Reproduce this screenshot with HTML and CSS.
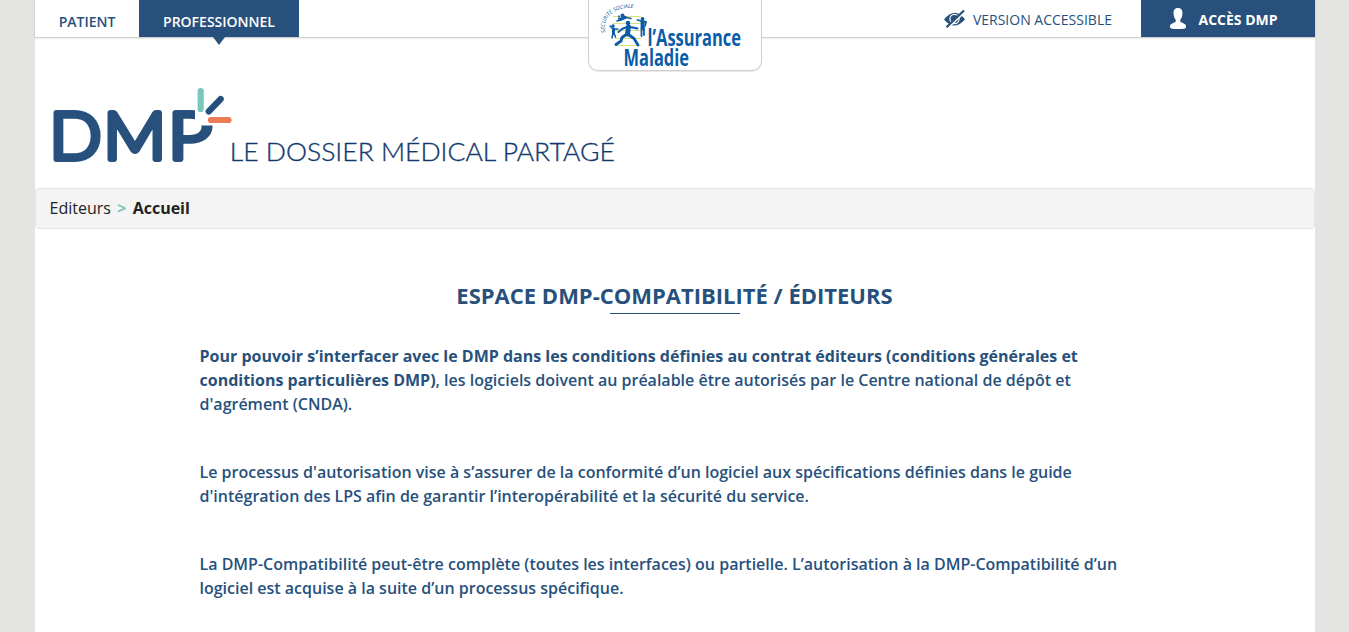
FILE: index.html
```
<!DOCTYPE html>
<html lang="fr">
<head>
<meta charset="utf-8">
<title>DMP - Espace éditeurs</title>
<link rel="stylesheet" href="styles.css">
</head>
<body>
<div class="page">
  <header class="topbar">
    <nav class="tabs">
      <a class="tab">PATIENT</a>
      <a class="tab tab-active">PROFESSIONNEL</a>
    </nav>
    <div class="tools">
      <a class="accessible">
        <svg width="22" height="20" viewBox="0 0 22 20">
          <path d="M0 10.500Q11-3 21 10.500Q10 22.500 0 10.500Z" fill="#27517c"/>
          <circle cx="10.500" cy="10" r="4.600" fill="none" stroke="#fff" stroke-width="1.200"/>
          <path d="M4.200 18.500L20.500 3" stroke="#fff" stroke-width="2.200"/>
          <path d="M2.500 18.300L20 1.500" stroke="#27517c" stroke-width="2.200"/>
        </svg>
        <span>VERSION ACCESSIBLE</span>
      </a>
      <a class="access">
        <svg width="16" height="21" viewBox="0 0 16 21">
          <path d="M8 0C11.500 0 12.700 2.500 12.400 6C12.200 9 11.300 10.500 10.300 11.800V13.700C12 15 16 15.500 16 18V19.500Q15.500 21 8 21T0 19.500V18C0 15.500 4 15 5.700 13.700V11.800C4.700 10.500 3.800 9 3.600 6C3.300 2.500 4.500 0 8 0Z" fill="#fff"/>
        </svg>
        <span>ACCÈS DMP</span>
      </a>
    </div>
    <div class="am-badge">
      <svg width="172" height="70" viewBox="589 0 172 70">
        <defs><path id="arc" d="M605.500 32.500C602 20 612 5 638 8.500"/></defs>
        <text class="am-arc"><textPath href="#arc" textLength="44">SÉCURITÉ SOCIALE</textPath></text>
        <g stroke="#d3e07c" stroke-width="1">
          <path d="M613 16.500H641M613 23.500H645M612 30.500H645M615 38.500H641M615 45.500H641"/>
        </g>
        <g fill="none" stroke="#0a5ca8" stroke-linecap="round" stroke-linejoin="round">
          <path d="M628.500 27L627.500 34" stroke-width="5"/>
          <path d="M628 26.500L622 29L618.500 32M630 27L637.500 28.500" stroke-width="2"/>
          <path d="M627 34L622 37.500L621 41L616 44.500M629 35L634 38.500L638 45" stroke-width="2.800"/>
          <path d="M620 19.500L625 17.500" stroke-width="3.200"/>
          <path d="M617 21L620 20M624 17L631 18.500M619 16V20" stroke-width="1.400"/>
          <path d="M613.500 29V33" stroke-width="3"/>
          <path d="M610 26L613 29L618 29M613 33L612 38M614 33L615.500 37" stroke-width="1.500"/>
          <path d="M642.500 22V28" stroke-width="3.800"/>
          <path d="M637.500 20L641 21L646 22L645 26M641.500 28V36M644 28V35" stroke-width="1.800"/>
        </g>
        <g fill="#0a5ca8">
          <circle cx="628" cy="23" r="2.300"/><circle cx="622.500" cy="15.500" r="2"/>
          <circle cx="613" cy="26" r="1.700"/><circle cx="642.500" cy="18.800" r="1.900"/>
        </g>
        <text class="am-text" x="647.500" y="46" textLength="93.500" lengthAdjust="spacingAndGlyphs">l’Assurance</text>
        <text class="am-text" x="623.500" y="65.500" textLength="65.500" lengthAdjust="spacingAndGlyphs">Maladie</text>
      </svg>
    </div>
  </header>

  <div class="brand">
    <svg width="570" height="104" viewBox="50 74 570 104">
      <g class="dmp">
        <text x="49.500" y="158.800" textLength="52" lengthAdjust="spacingAndGlyphs">D</text>
        <text x="103.500" y="158.800" textLength="62.500" lengthAdjust="spacingAndGlyphs">M</text>
        <text x="168" y="158.800" textLength="44" lengthAdjust="spacingAndGlyphs">P</text>
      </g>
      <path d="M195 104H218V125.500H201L195 121Z" fill="#fff"/>
      <g stroke-width="6.200" stroke-linecap="round">
        <path d="M200.700 91V109" stroke="#79c7bf"/>
        <path d="M208.700 111.500L220.700 99" stroke="#244f7b"/>
        <path d="M211 120H228.500" stroke="#ea7d55"/>
      </g>
      <text class="tagline" x="229.800" y="160.800" textLength="385" lengthAdjust="spacingAndGlyphs">LE DOSSIER MÉDICAL PARTAGÉ</text>
    </svg>
  </div>

  <nav class="breadcrumb">
    <span>Editeurs</span><span class="sep">&gt;</span><strong>Accueil</strong>
  </nav>

  <main class="content">
    <h1>ESPACE DMP-COMPATIBILITÉ / ÉDITEURS</h1>
    <p><b>Pour pouvoir s’interfacer avec le DMP dans les conditions définies au contrat éditeurs (conditions générales et<br>conditions particulières DMP)</b>, les logiciels doivent au préalable être autorisés par le Centre national de dépôt et<br>d'agrément (CNDA).</p>
    <p>Le processus d'autorisation vise à s’assurer de la conformité d’un logiciel aux spécifications définies dans le guide<br>d'intégration des LPS afin de garantir l’interopérabilité et la sécurité du service.</p>
    <p>La DMP-Compatibilité peut-être complète (toutes les interfaces) ou partielle. L’autorisation à la DMP-Compatibilité d’un<br>logiciel est acquise à la suite d’un processus spécifique.</p>
  </main>
</div>
</body>
</html>
```
FILE: styles.css
```
* { box-sizing: border-box; }
body {
  margin: 0;
  background: #e4e4e2;
  font-family: "Open Sans", sans-serif;
  color: #27517c;
  overflow: hidden;
}
.page {
  width: 1280px;
  height: 632px;
  margin-left: 35px;
  background: #fff;
}
.topbar {
  position: relative;
  display: flex;
  justify-content: space-between;
  height: 38px;
  border-bottom: 1px solid #d2d2d2;
  box-shadow: 0 0 2px rgba(0, 0, 0, .2);
}
.tabs, .tools { display: flex; height: 37px; }
.tab {
  position: relative;
  width: 104px;
  padding-top: 3px;
  text-align: center;
  font-size: 14px;
  font-weight: 600;
  line-height: 37px;
}
.tab-active {
  width: 160px;
  background: #27517c;
  color: #fff;
}
.tab-active::after {
  content: "";
  position: absolute;
  left: 74px;
  top: 37px;
  border: 6px solid transparent;
  border-top: 8px solid #27517c;
  border-bottom: 0;
}
.accessible, .access {
  display: flex;
  align-items: center;
  font-size: 14px;
}
.accessible { gap: 7px; margin-right: 29px; padding-top: 2px; }
.accessible svg { margin-top: -2px; }
.access {
  width: 174px;
  gap: 12.5px;
  padding-left: 29px;
  background: #27517c;
  color: #fff;
  font-weight: 700;
}
.access span { padding-top: 2px; }
.am-badge {
  position: absolute;
  left: 553px;
  top: -2px;
  width: 174px;
  height: 73px;
  padding-top: 1px;
  background: #fff;
  border: 1px solid #d0d0d0;
  border-radius: 0 0 10px 10px;
  box-shadow: 0 1px 1px rgba(0, 0, 0, .1);
}
.am-badge svg { display: block; overflow: visible; }
.am-arc {
  font: italic 5.5px "Open Sans", sans-serif;
  fill: #0a5ca8;
}
.am-text {
  font: 700 22.5px "Open Sans", sans-serif;
  fill: #0a5ca8;
}
.brand { height: 150px; padding: 36px 0 0 15px; }
.brand svg { display: block; overflow: visible; }
.dmp {
  font: 300 65px Lato, sans-serif;
  fill: #27517c;
  stroke: #27517c;
  stroke-width: 6px;
  stroke-linejoin: round;
}
.tagline {
  font: 300 26px Lato, sans-serif;
  fill: #12386d;
  stroke: #12386d;
  stroke-width: .35px;
}
.breadcrumb {
  height: 41px;
  padding-left: 13.5px;
  border: 1px solid #e4e4e4;
  border-radius: 4px;
  background: #f4f4f4;
  color: #222;
  font-size: 16px;
  line-height: 38px;
}
.sep { margin: 0 6.3px; color: #79c7bf; font-weight: 700; }
.content { padding: 50px 0 0 164.5px; }
h1 {
  position: relative;
  width: 950px;
  height: 34px;
  margin: 0 0 31px;
  text-align: center;
  font-size: 22px;
  font-weight: 700;
  line-height: 32px;
}
h1::after {
  content: "";
  position: absolute;
  left: 410.5px;
  top: 34px;
  width: 130px;
  height: 1px;
  background: #27517c;
}
p {
  margin: 0 0 44px;
  font-size: 16px;
  font-weight: 600;
  line-height: 24px;
  white-space: nowrap;
}
b { font-weight: 700; }
```
